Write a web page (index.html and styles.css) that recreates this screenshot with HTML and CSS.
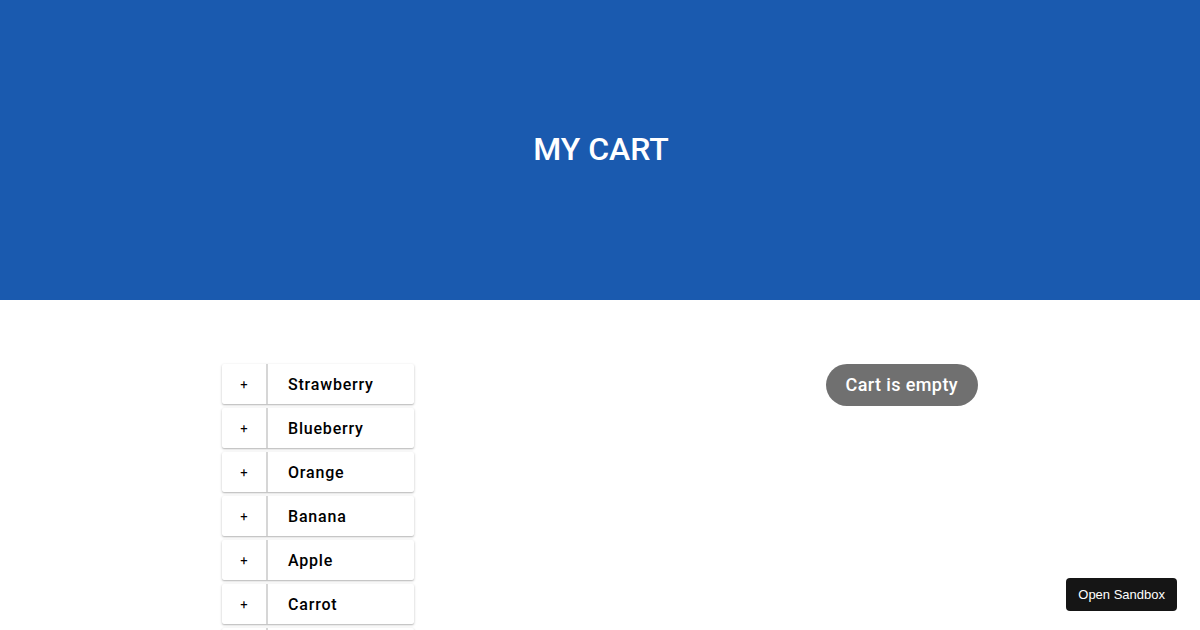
FILE: index.html
```html
<!DOCTYPE html>
<html lang="en">
<head>
    <meta charset="UTF-8">
    <meta name="viewport" content="width=device-width, initial-scale=1.0">
    <title>My Cart</title>
    <link rel="stylesheet" href="styles.css">
</head>
<body>
    <header class="header">
        <h1>MY CART</h1>
    </header>
    <main class="content">
        <ul class="products">
            <li class="product"><button class="add">+</button><span class="name">Strawberry</span></li>
            <li class="product"><button class="add">+</button><span class="name">Blueberry</span></li>
            <li class="product"><button class="add">+</button><span class="name">Orange</span></li>
            <li class="product"><button class="add">+</button><span class="name">Banana</span></li>
            <li class="product"><button class="add">+</button><span class="name">Apple</span></li>
            <li class="product"><button class="add">+</button><span class="name">Carrot</span></li>
            <li class="product"><button class="add">+</button><span class="name">Celery</span></li>
        </ul>
        <div class="cart">
            <span class="empty">Cart is empty</span>
        </div>
    </main>
    <a class="sandbox" href="#">Open Sandbox</a>
</body>
</html>
```

FILE: styles.css
```css
body {
    font-family: Roboto, "Liberation Sans", sans-serif;
    margin: 0;
    padding: 0;
    overflow: hidden;
    height: 630px;
}

.header {
    background-color: #1a5aaf;
    height: 300px;
    display: flex;
    align-items: center;
    justify-content: center;
}

.header h1 {
    margin: 0;
    color: #fff;
    font-size: 32px;
    font-weight: 500;
    padding-bottom: 2px;
    padding-left: 2px;
}

.content {
    width: 756px;
    margin: 0 auto;
    padding-top: 64px;
    display: flex;
    justify-content: space-between;
    align-items: flex-start;
}

.products {
    list-style: none;
    margin: 0;
    padding: 0;
    display: flex;
    flex-direction: column;
    gap: 4px;
}

.product {
    width: 192px;
    height: 40px;
    display: flex;
    align-items: center;
    background: #fff;
    border-radius: 2px;
    box-shadow: 0 1px 3px rgba(0, 0, 0, 0.2), 0 1px 1px rgba(0, 0, 0, 0.12);
}

.add {
    width: 46px;
    height: 100%;
    border: none;
    border-right: 2px solid #d6d6d6;
    background: transparent;
    font-family: inherit;
    font-size: 13px;
    font-weight: 400;
    color: #000;
    padding: 0;
    cursor: pointer;
}

.name {
    padding-left: 20px;
    font-size: 16px;
    font-weight: 500;
    letter-spacing: 0.8px;
    color: #000;
}

.empty {
    display: inline-block;
    background: #707070;
    color: #fff;
    font-size: 18px;
    font-weight: 500;
    letter-spacing: 0.4px;
    height: 42px;
    line-height: 42px;
    padding: 0 20px;
    border-radius: 21px;
}

.sandbox {
    position: fixed;
    right: 23px;
    bottom: 19px;
    background: #151515;
    color: #fff;
    font-family: "Liberation Sans", Arial, sans-serif;
    font-size: 13px;
    text-decoration: none;
    padding: 8px 12px;
    border-radius: 4px;
    line-height: 17px;
}
```
